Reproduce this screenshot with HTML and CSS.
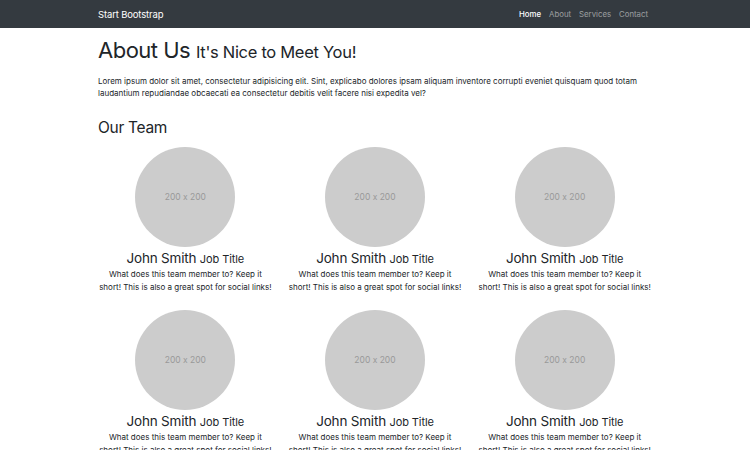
FILE: index.html
```html
<!DOCTYPE html>
<html lang="en">
<head>
<meta charset="utf-8">
<title>About - Start Bootstrap</title>
<link rel="stylesheet" href="styles.css">
</head>
<body>
<nav class="navbar">
  <div class="container nav-inner">
    <a class="brand" href="#">Start Bootstrap</a>
    <ul class="nav-links">
      <li><a class="active" href="#">Home</a></li>
      <li><a href="#">About</a></li>
      <li><a href="#">Services</a></li>
      <li><a href="#">Contact</a></li>
    </ul>
  </div>
</nav>
<main class="container">
  <h1 class="title">About Us <small>It's Nice to Meet You!</small></h1>
  <p class="lead">Lorem ipsum dolor sit amet, consectetur adipisicing elit. Sint, explicabo dolores ipsam aliquam inventore corrupti eveniet quisquam quod totam laudantium repudiandae obcaecati ea consectetur debitis velit facere nisi expedita vel?</p>
  <h2 class="section-title">Our Team</h2>
  <div class="team">
    <div class="member">
      <div class="avatar">200 x 200</div>
      <h3 class="name">John Smith <small>Job Title</small></h3>
      <p class="bio">What does this team member to? Keep it short! This is also a great spot for social links!</p>
    </div>
    <div class="member">
      <div class="avatar">200 x 200</div>
      <h3 class="name">John Smith <small>Job Title</small></h3>
      <p class="bio">What does this team member to? Keep it short! This is also a great spot for social links!</p>
    </div>
    <div class="member">
      <div class="avatar">200 x 200</div>
      <h3 class="name">John Smith <small>Job Title</small></h3>
      <p class="bio">What does this team member to? Keep it short! This is also a great spot for social links!</p>
    </div>
    <div class="member">
      <div class="avatar">200 x 200</div>
      <h3 class="name">John Smith <small>Job Title</small></h3>
      <p class="bio">What does this team member to? Keep it short! This is also a great spot for social links!</p>
    </div>
    <div class="member">
      <div class="avatar">200 x 200</div>
      <h3 class="name">John Smith <small>Job Title</small></h3>
      <p class="bio">What does this team member to? Keep it short! This is also a great spot for social links!</p>
    </div>
    <div class="member">
      <div class="avatar">200 x 200</div>
      <h3 class="name">John Smith <small>Job Title</small></h3>
      <p class="bio">What does this team member to? Keep it short! This is also a great spot for social links!</p>
    </div>
  </div>
</main>
</body>
</html>
```
FILE: styles.css
```css
* { box-sizing: border-box; }
html, body { margin: 0; padding: 0; }
body {
  font-family: Inter, "Liberation Sans", sans-serif;
  font-feature-settings: "calt" 0;
  font-size: 8px;
  line-height: 1.5;
  color: #212529;
  background: #fff;
  overflow: hidden;
}
.container {
  width: 554px;
  margin: 0 auto;
}
.navbar {
  background: #343a40;
  height: 28px;
}
.nav-inner {
  display: flex;
  align-items: center;
  justify-content: space-between;
  height: 28px;
}
.brand {
  color: #fff;
  text-decoration: none;
  font-size: 9.5px;
  line-height: 15px;
  letter-spacing: -0.15px;
}
.nav-links {
  list-style: none;
  margin: 0 4px 0 0;
  padding: 0;
  display: flex;
  gap: 8px;
}
.nav-links a {
  color: rgba(255,255,255,.5);
  text-decoration: none;
  font-size: 7.8px;
  line-height: 12px;
}
.nav-links a.active { color: #fff; font-weight: 500; }
.title {
  font-size: 22px;
  font-weight: 400;
  line-height: 1.2;
  margin: 9px 0 12px;
  letter-spacing: -0.5px;
}
.title small { font-size: 16.5px; letter-spacing: -0.3px; }
.lead {
  margin: 0 0 20px;
  font-size: 8px;
  line-height: 12px;
}
.section-title {
  font-size: 15.5px;
  font-weight: 400;
  line-height: 1.2;
  margin: 0 0 9px;
  letter-spacing: -0.3px;
}
.team {
  display: grid;
  grid-template-columns: repeat(3, 1fr);
  margin: 0 -7.5px;
}
.member {
  padding: 0 7.5px;
  text-align: center;
  margin-bottom: 15px;
}
.avatar {
  width: 100px;
  height: 100px;
  margin: 0 auto;
  border-radius: 50%;
  background: #cccccc;
  color: #999999;
  font-size: 8.5px;
  display: flex;
  align-items: center;
  justify-content: center;
}
.name {
  margin: 2px 0 0;
  font-size: 13.5px;
  font-weight: 400;
  line-height: 18px;
  letter-spacing: -0.2px;
}
.name small { font-size: 11px; letter-spacing: -0.1px; }
.bio {
  margin: 0;
  font-size: 8px;
  line-height: 13.5px;
}
```
